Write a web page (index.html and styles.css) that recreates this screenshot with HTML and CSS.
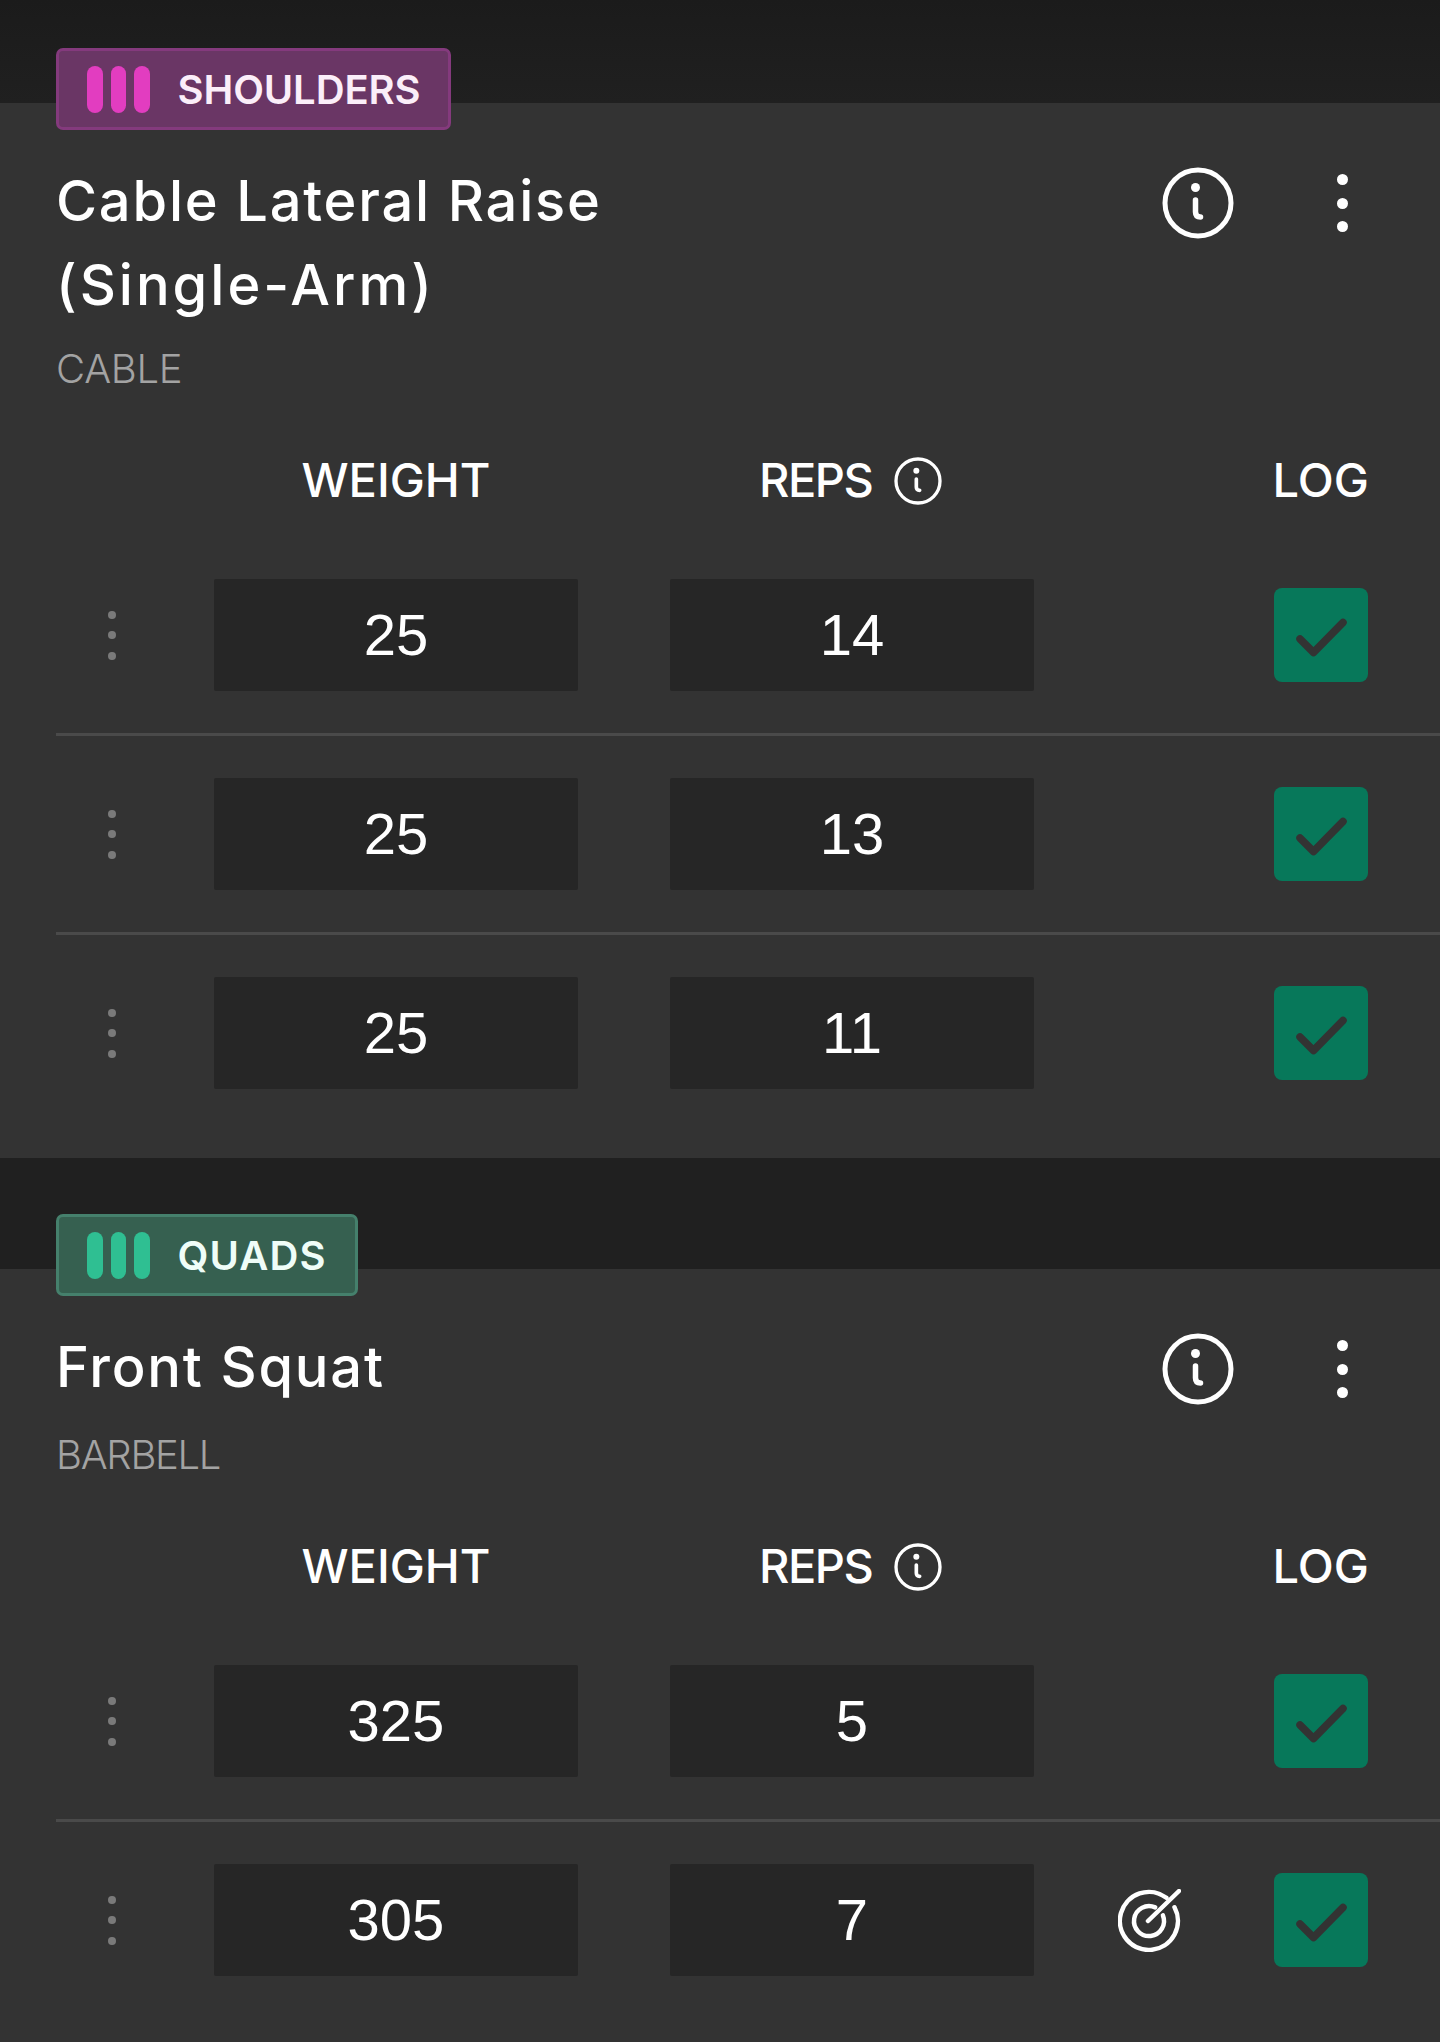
FILE: index.html
```html
<!DOCTYPE html>
<html lang="en">
<head>
    <meta charset="UTF-8">
    <meta name="viewport" content="width=device-width, initial-scale=1.0">
    <title>Workout</title>
    <link rel="stylesheet" href="styles.css">
</head>
<body>
    <svg class="icon-defs" aria-hidden="true">
        <symbol id="info" viewBox="0 0 72 72">
            <circle cx="36" cy="36" r="33" fill="none" stroke="currentColor" stroke-width="5"/>
            <circle cx="33.5" cy="20.5" r="4.5" fill="currentColor"/>
            <path d="M33.5 33V45Q33.5 50 38.5 50" fill="none" stroke="currentColor" stroke-width="5.5" stroke-linecap="round"/>
        </symbol>
        <symbol id="check" viewBox="0 0 94 94">
            <path d="M26 51L39.500 64.500L69 34.500" fill="none" stroke="currentColor" stroke-width="7.500" stroke-linecap="round" stroke-linejoin="round"/>
        </symbol>
    </svg>

    <section class="exercise">
        <div class="badge badge-shoulders">
            <span class="bars"><i></i><i></i><i></i></span>
            <span>SHOULDERS</span>
        </div>
        <div class="exercise-head">
            <h2 class="title">Cable Lateral Raise <span class="title-variant">(Single-Arm)</span></h2>
            <svg class="info-btn"><use href="#info"/></svg>
            <div class="more"><i></i><i></i><i></i></div>
        </div>
        <div class="equipment">CABLE</div>

        <div class="set-grid set-header">
            <span></span>
            <span class="col-label">WEIGHT</span>
            <span class="col-label col-reps"><span class="reps-text">REPS</span><svg class="info-small"><use href="#info"/></svg></span>
            <span class="col-log">LOG</span>
        </div>

        <div class="set-grid set-row">
            <div class="handle"><i></i><i></i><i></i></div>
            <div class="value">25</div>
            <div class="value">14</div>
            <div class="log-cell"><svg class="check"><use href="#check"/></svg></div>
        </div>
        <div class="set-grid set-row">
            <div class="handle"><i></i><i></i><i></i></div>
            <div class="value">25</div>
            <div class="value">13</div>
            <div class="log-cell"><svg class="check"><use href="#check"/></svg></div>
        </div>
        <div class="set-grid set-row">
            <div class="handle"><i></i><i></i><i></i></div>
            <div class="value">25</div>
            <div class="value">11</div>
            <div class="log-cell"><svg class="check"><use href="#check"/></svg></div>
        </div>
    </section>

    <section class="exercise">
        <div class="badge badge-quads">
            <span class="bars"><i></i><i></i><i></i></span>
            <span>QUADS</span>
        </div>
        <div class="exercise-head">
            <h2 class="title">Front Squat</h2>
            <svg class="info-btn"><use href="#info"/></svg>
            <div class="more"><i></i><i></i><i></i></div>
        </div>
        <div class="equipment equipment-tight">BARBELL</div>

        <div class="set-grid set-header">
            <span></span>
            <span class="col-label">WEIGHT</span>
            <span class="col-label col-reps"><span class="reps-text">REPS</span><svg class="info-small"><use href="#info"/></svg></span>
            <span class="col-log">LOG</span>
        </div>

        <div class="set-grid set-row">
            <div class="handle"><i></i><i></i><i></i></div>
            <div class="value">325</div>
            <div class="value">5</div>
            <div class="log-cell"><svg class="check"><use href="#check"/></svg></div>
        </div>
        <div class="set-grid set-row">
            <div class="handle"><i></i><i></i><i></i></div>
            <div class="value">305</div>
            <div class="value">7</div>
            <div class="log-cell">
                <svg class="target" viewBox="0 0 63 63">
                    <path d="M48.400 8.800A29 29 0 1 0 56.500 18.300" fill="none" stroke="currentColor" stroke-width="4.500" stroke-linecap="round"/>
                    <path d="M37.200 18.400A15 15 0 1 0 44.900 26.400" fill="none" stroke="currentColor" stroke-width="4.500" stroke-linecap="round"/>
                    <path d="M30 32L61 2" fill="none" stroke="currentColor" stroke-width="4.500" stroke-linecap="round"/>
                </svg>
                <svg class="check"><use href="#check"/></svg>
            </div>
        </div>
    </section>
</body>
</html>
```

FILE: styles.css
```css
html, body {
    margin: 0;
    height: 2042px;
    overflow: hidden;
}
body {
    background: linear-gradient(#1b1b1b, #202020 103px) no-repeat #202020;
    color: #ffffff;
    font-family: Inter, "Open Sans", sans-serif;
}
.icon-defs {
    display: none;
}
.exercise {
    display: flow-root;
    margin-top: 111px;
    padding: 0 0 27px 56px;
    background: #333333;
}
.exercise:first-of-type {
    margin-top: 103px;
}
.exercise:last-of-type {
    min-height: 800px;
}

/* muscle group tag */
.badge {
    display: flex;
    align-items: center;
    gap: 28px;
    width: fit-content;
    height: 82px;
    box-sizing: border-box;
    margin-top: -55px;
    padding: 0 28px;
    border: 3px solid;
    border-radius: 7px;
    font-size: 40px;
    font-weight: 600;
}
.badge-shoulders {
    background: #6a3665;
    border-color: #843a7d;
    color: #fbeef9;
    letter-spacing: -0.1px;
}
.badge-quads {
    background: #366050;
    border-color: #45806c;
    color: #effdf8;
    letter-spacing: 1.100px;
}
.bars {
    display: flex;
    gap: 8px;
}
.bars i {
    width: 15.500px;
    height: 47px;
    border-radius: 8px;
}
.badge-shoulders .bars i {
    background: #e23dc0;
}
.badge-quads .bars i {
    background: #2fbf92;
}

.exercise-head {
    display: flex;
    align-items: flex-start;
    min-height: 88px;
    margin-top: 29px;
}
.title {
    flex: none;
    width: 1106px;
    margin: 0;
    padding-right: 440px;
    box-sizing: border-box;
    font-size: 56px;
    font-weight: 500;
    letter-spacing: 1.800px;
    line-height: 84px;
}
.title-variant {
    letter-spacing: 3px;
}
.info-btn {
    flex: none;
    width: 72px;
    height: 72px;
    margin-top: 8px;
    color: #ffffff;
}
.more {
    display: flex;
    flex-direction: column;
    gap: 12.500px;
    margin: 15px 0 0 103px;
}
.more i {
    width: 11px;
    height: 11px;
    border-radius: 50%;
    background: #ffffff;
}
.equipment {
    margin-top: 12px;
    font-size: 40px;
    font-weight: 300;
    letter-spacing: -0.3px;
    line-height: 60px;
    color: #a3a3a3;
}
.equipment-tight {
    letter-spacing: -1.300px;
}

/* sets table */
.set-grid {
    display: grid;
    grid-template-columns: 66px 364px 364px minmax(0, 1fr);
    column-gap: 92px;
    padding-right: 72px;
}
.set-header {
    align-items: center;
    height: 72px;
    margin-top: 44px;
    margin-bottom: 22px;
    font-size: 47px;
    font-weight: 500;
}
.col-label {
    display: flex;
    align-items: center;
    justify-content: center;
    white-space: nowrap;
}
.col-reps {
    justify-content: flex-start;
    gap: 22px;
    padding-left: 89px;
}
.reps-text {
    letter-spacing: -1.500px;
}
.info-small {
    flex: none;
    width: 48px;
    height: 48px;
    margin-top: 4px;
}
.col-log {
    text-align: right;
    margin-right: -1px;
}
.set-row {
    align-items: center;
    padding: 42px 72px 42px 0;
    border-bottom: 3px solid #4a4a4a;
}
.set-row:last-child {
    border-bottom: none;
}
.handle {
    display: flex;
    flex-direction: column;
    gap: 12.500px;
    padding-left: 52px;
}
.handle i {
    width: 7.500px;
    height: 8px;
    border-radius: 50%;
    background: #7a7a7a;
}
.value {
    height: 112px;
    background: #262626;
    border-radius: 2px;
    font-family: "Liberation Sans", Roboto, sans-serif;
    font-size: 58px;
    line-height: 112px;
    text-align: center;
}
.log-cell {
    display: flex;
    align-items: center;
    justify-content: flex-end;
    gap: 93px;
}
.check {
    flex: none;
    width: 94px;
    height: 94px;
    border-radius: 8px;
    background: #07785a;
    color: #333333;
}
.target {
    flex: none;
    width: 63px;
    height: 63px;
    color: #ffffff;
}
```
